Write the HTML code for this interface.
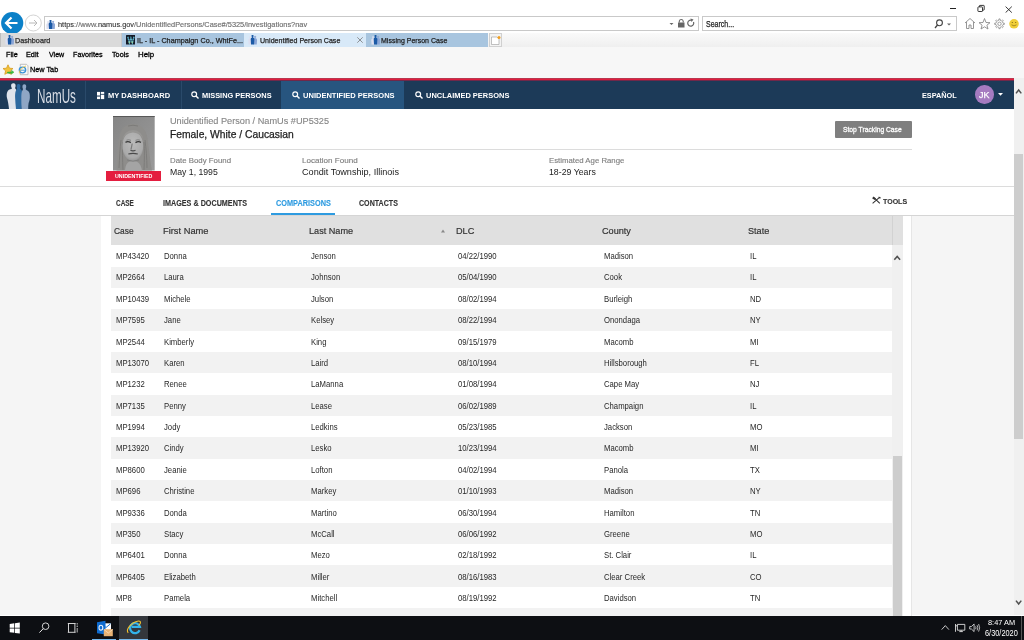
<!DOCTYPE html>
<html><head><meta charset="utf-8">
<style>
*{margin:0;padding:0;box-sizing:border-box}
html,body{width:1024px;height:640px;overflow:hidden;background:#fff;font-family:"Liberation Sans",sans-serif}
div,span,svg{position:absolute}
span{white-space:nowrap;line-height:1}
/* ---------- IE chrome ---------- */
#chrome{left:0;top:0;width:1024px;height:33px;background:#fff}
#tabrow{left:0;top:33px;width:1024px;height:14px;background:linear-gradient(#fafafa,#efefef)}
.tab{top:33px;height:13.5px;font-size:7px;color:#222}
.tab span{top:3.5px}
#menubar{left:0;top:47px;width:1024px;height:31px;background:#f7f7f7}
.menu{top:51px;font-size:7.1px;color:#1e1e1e}
#redline{left:0;top:78px;width:1014px;height:3px;background:linear-gradient(#b9374f 0 1px,#e01d3e 1px 2px,#70284a 2px 3px)}
/* ---------- NamUs nav ---------- */
#nav{left:0;top:81px;width:1014px;height:28px;background:#1c3a58}
.sep{top:80.5px;width:1px;height:28.5px;background:#2a4a6a}
.nav{top:92.3px;font-size:7.45px;font-weight:bold;color:#fff}
/* ---------- page ---------- */
#pagebg{left:0;top:109px;width:1014px;height:506px;background:#f5f5f5}
#hdr{left:0;top:109px;width:1014px;height:107px;background:#fff}
.hl{height:1px;background:#dcdcdc}
.row{left:111px;width:780.5px;height:21.4px;font-size:7.4px;color:#333;background:#fff}
.row.alt{background:#f2f2f2}
.row span{top:8px}
.c1{left:5.2px}.c2{left:54px}.c3{left:200px}.c4{left:347px}.c5{left:493.2px}.c6{left:639.3px}
.th{top:226.3px;font-size:8.9px;color:#333}
/* ---------- scrollbars ---------- */
#pscroll{left:1013.5px;top:78px;width:10.5px;height:537px;background:#f0f0f0}
#taskbar{left:0;top:615.5px;width:1024px;height:24.5px;background:#0d0f13}
</style></head>
<body>
<!-- IE chrome -->
<div id="chrome"></div>
<!-- window controls -->
<div style="left:950.3px;top:8px;width:6px;height:1px;background:#222"></div>
<svg style="left:976px;top:4px" width="10" height="9" viewBox="0 0 10 9"><rect x="1.9" y="2.9" width="4.6" height="4.6" rx="0.6" fill="none" stroke="#222" stroke-width="0.9"/><path d="M3.4 2.9V1.9Q3.4 1.4 3.9 1.4H7.7Q8.2 1.4 8.2 1.9V5.6Q8.2 6.1 7.7 6.1H6.5" fill="none" stroke="#222" stroke-width="0.9"/></svg>
<svg style="left:1005px;top:5.5px" width="8" height="7" viewBox="0 0 8 7"><path d="M0.6 0.6L6.8 6.6M6.8 0.6L0.6 6.6" stroke="#222" stroke-width="0.9"/></svg>
<!-- back / fwd -->
<svg style="left:0;top:11px" width="46" height="24" viewBox="0 0 46 24">
  <circle cx="12.2" cy="12" r="11.1" fill="#0b80c8"/>
  <path d="M6.5 12H17.5M11.5 6.5L6 12L11.5 17.5" fill="none" stroke="#fff" stroke-width="2.2"/>
  <circle cx="33.3" cy="12" r="8" fill="#fff" stroke="#c8c8c8" stroke-width="0.8"/>
  <path d="M29 12H37M34 9L37 12L34 15" fill="none" stroke="#b8b8b8" stroke-width="1"/>
</svg>
<!-- address -->
<div style="left:43.5px;top:16.3px;width:655px;height:14.5px;border:1px solid #c9c9c9;background:#fff"></div>
<svg style="left:46.3px;top:19.5px" width="9.4" height="9.2" viewBox="0 0 8.7 9.6" preserveAspectRatio="none"><path d="M1.40 2.82A0.90 0.90 0 1 1 2.40 2.82L2.35 3.40Q3.60 3.60 3.60 5.10L3.30 9.60L0.50 9.60L0.20 5.10Q0.20 3.60 1.45 3.40Z" fill="#dcdff0"/><path d="M6.08 2.61A0.95 0.95 0 1 1 7.12 2.61L7.07 3.20Q8.40 3.40 8.40 4.90L8.10 9.60L5.10 9.60L4.80 4.90Q4.80 3.40 6.12 3.20Z" fill="#8ba6d6"/><path d="M3.65 1.80A1.00 1.00 0 1 1 4.75 1.80L4.70 2.40Q5.90 2.60 5.90 4.10L5.60 9.60L2.80 9.60L2.50 4.10Q2.50 2.60 3.70 2.40Z" fill="#1b5aa6"/></svg>
<svg style="left:669px;top:18px" width="28" height="11" viewBox="0 0 28 11"><path d="M0.5 5H4.5L2.5 7Z" fill="#666"/><rect x="9" y="4.5" width="6.5" height="5" fill="#666"/><path d="M10.3 4.5V3A2 2 0 0 1 14.2 3V4.5" fill="none" stroke="#666" stroke-width="1.1"/><path d="M24.5 4A3 3 0 1 1 22.2 2.2" fill="none" stroke="#666" stroke-width="1.2"/><path d="M21.5 0.5L24.5 1.5L22.5 4Z" fill="#666"/></svg>
<!-- search -->
<div style="left:702.3px;top:16.3px;width:254.5px;height:14.5px;border:1px solid #c9c9c9;background:#fff"></div>
<svg style="left:934px;top:19px" width="18" height="10" viewBox="0 0 18 10"><circle cx="5.5" cy="3.8" r="2.9" fill="none" stroke="#444" stroke-width="1.1"/><path d="M3.5 6L1 9" stroke="#444" stroke-width="1.3"/><path d="M13 4.5H17L15 6.5Z" fill="#666"/></svg>
<!-- right icons -->
<svg style="left:963px;top:17px" width="58" height="13" viewBox="0 0 58 13">
  <path d="M2 6L7 1.5L12 6M3.5 5V11.5H6V8H8V11.5H10.5V5" fill="none" stroke="#8a8a8a" stroke-width="0.9"/>
  <path d="M21.5 1.5L23 5.5L27 5.7L23.9 8.2L25 12L21.5 9.8L18 12L19.1 8.2L16 5.7L20 5.5Z" fill="none" stroke="#8a8a8a" stroke-width="0.9"/>
  <path d="M40.04 6.17L41.37 6.22L41.37 7.38L40.04 7.43L39.45 8.86L39.45 8.86L40.35 9.83L39.53 10.65L38.56 9.75L37.13 10.34L37.13 10.34L37.08 11.67L35.92 11.67L35.87 10.34L34.44 9.75L34.44 9.75L33.47 10.65L32.65 9.83L33.55 8.86L32.96 7.43L32.96 7.43L31.63 7.38L31.63 6.22L32.96 6.17L33.55 4.74L33.55 4.74L32.65 3.77L33.47 2.95L34.44 3.85L35.87 3.26L35.87 3.26L35.92 1.93L37.08 1.93L37.13 3.26L38.56 3.85L38.56 3.85L39.53 2.95L40.35 3.77L39.45 4.74L40.04 6.17Z" fill="none" stroke="#8a8a8a" stroke-width="0.8" stroke-linejoin="round"/>
  <circle cx="36.5" cy="6.8" r="1.7" fill="none" stroke="#8a8a8a" stroke-width="0.8"/>
  <circle cx="51" cy="6.8" r="4.8" fill="#f0cf3a"/>
  <circle cx="49.3" cy="5.5" r="0.6" fill="#7a6010"/><circle cx="52.7" cy="5.5" r="0.6" fill="#7a6010"/>
  <path d="M48.5 7.8Q51 10 53.5 7.8" fill="none" stroke="#7a6010" stroke-width="0.6"/>
</svg>
<!-- tab row -->
<div id="tabrow"></div>
<div style="left:0;top:46.5px;width:1024px;height:0.5px;background:#d5d5d5"></div>
<div class="tab" style="left:0;width:122.2px;background:#dadada;border-left:1px solid #bdbdbd;border-right:1px solid #c8c8c8"></div>
<div class="tab" style="left:122.2px;width:121.8px;background:#a8c5df"></div>
<div class="tab" style="left:244px;width:122px;background:#d8e9f8"></div>
<div class="tab" style="left:366px;width:121.5px;background:#a8c5df"></div>
<div style="left:488.9px;top:33px;width:12.7px;height:13.5px;background:#f3f3f3;border:1px solid #d0d0d0"></div>
<svg style="left:491px;top:35.5px" width="10" height="9" viewBox="0 0 10 9"><path d="M0.5 1H6L8 3V8.5H0.5Z" fill="#fff" stroke="#999" stroke-width="0.6"/><circle cx="8" cy="1.5" r="1.5" fill="#f2a020"/></svg>
<!-- tab icons -->
<svg style="left:4.5px;top:35.3px" width="9.4" height="9.6" viewBox="0 0 8.7 9.6" preserveAspectRatio="none"><path d="M1.40 2.82A0.90 0.90 0 1 1 2.40 2.82L2.35 3.40Q3.60 3.60 3.60 5.10L3.30 9.60L0.50 9.60L0.20 5.10Q0.20 3.60 1.45 3.40Z" fill="#dcdff0"/><path d="M6.08 2.61A0.95 0.95 0 1 1 7.12 2.61L7.07 3.20Q8.40 3.40 8.40 4.90L8.10 9.60L5.10 9.60L4.80 4.90Q4.80 3.40 6.12 3.20Z" fill="#8ba6d6"/><path d="M3.65 1.80A1.00 1.00 0 1 1 4.75 1.80L4.70 2.40Q5.90 2.60 5.90 4.10L5.60 9.60L2.80 9.60L2.50 4.10Q2.50 2.60 3.70 2.40Z" fill="#1b5aa6"/></svg>
<svg style="left:125.5px;top:35.25px" width="9.75" height="9.5" viewBox="0 0 9.75 9.5"><rect width="9.75" height="9.5" rx="0.5" fill="#141a26"/><path d="M1.8 1.8L3.4 7.8L4.9 3L6.4 7.8L8 1.8" fill="none" stroke="#5ab0c8" stroke-width="1.4"/><path d="M3 6.5L3.6 8M6 6.5L6.4 8" stroke="#9ed49a" stroke-width="1.3"/><rect y="5" width="9.75" height="0.6" fill="#141a26" opacity="0.7"/><rect y="3" width="9.75" height="0.5" fill="#141a26" opacity="0.5"/></svg>
<svg style="left:248.3px;top:35.4px" width="9.4" height="9.6" viewBox="0 0 8.7 9.6" preserveAspectRatio="none"><path d="M1.40 2.82A0.90 0.90 0 1 1 2.40 2.82L2.35 3.40Q3.60 3.60 3.60 5.10L3.30 9.60L0.50 9.60L0.20 5.10Q0.20 3.60 1.45 3.40Z" fill="#dcdff0"/><path d="M6.08 2.61A0.95 0.95 0 1 1 7.12 2.61L7.07 3.20Q8.40 3.40 8.40 4.90L8.10 9.60L5.10 9.60L4.80 4.90Q4.80 3.40 6.12 3.20Z" fill="#8ba6d6"/><path d="M3.65 1.80A1.00 1.00 0 1 1 4.75 1.80L4.70 2.40Q5.90 2.60 5.90 4.10L5.60 9.60L2.80 9.60L2.50 4.10Q2.50 2.60 3.70 2.40Z" fill="#1b5aa6"/></svg>
<svg style="left:370.5px;top:35.4px" width="9.4" height="9.6" viewBox="0 0 8.7 9.6" preserveAspectRatio="none"><path d="M1.40 2.82A0.90 0.90 0 1 1 2.40 2.82L2.35 3.40Q3.60 3.60 3.60 5.10L3.30 9.60L0.50 9.60L0.20 5.10Q0.20 3.60 1.45 3.40Z" fill="#dcdff0"/><path d="M6.08 2.61A0.95 0.95 0 1 1 7.12 2.61L7.07 3.20Q8.40 3.40 8.40 4.90L8.10 9.60L5.10 9.60L4.80 4.90Q4.80 3.40 6.12 3.20Z" fill="#8ba6d6"/><path d="M3.65 1.80A1.00 1.00 0 1 1 4.75 1.80L4.70 2.40Q5.90 2.60 5.90 4.10L5.60 9.60L2.80 9.60L2.50 4.10Q2.50 2.60 3.70 2.40Z" fill="#1b5aa6"/></svg>
<!-- menu bar -->
<div id="menubar"></div>
<svg style="left:0;top:62px" width="30" height="15" viewBox="0 0 30 15">
  <path d="M8 2.8L9.5 6.2L13 6.5L10.4 8.8L11.2 12.3L8 10.5L4.8 12.3L5.6 8.8L3 6.5L6.5 6.2Z" fill="#f3c33a" stroke="#d49a20" stroke-width="0.8" stroke-linejoin="round"/>
  <path d="M7.5 10H11.5V8.3L14 10.2L11.5 12.1V11.2H7.5Z" fill="#3cc040" stroke="#2aa030" stroke-width="0.4"/>
  <path d="M20.3 2.3H26.5L28 3.8V12.7H20.3Z" fill="#fafafa" stroke="#a8a8a8" stroke-width="0.7"/>
  <ellipse cx="22.5" cy="8" rx="3.2" ry="2.8" fill="none" stroke="#3a94d8" stroke-width="1.3"/>
  <path d="M19.5 8.2H25.5" stroke="#3a94d8" stroke-width="0.9"/>
  <path d="M19.8 11.5C18 10 22 5 26 4" fill="none" stroke="#f0c53a" stroke-width="0.9"/>
</svg>
<div id="redline"></div>
<!-- NamUs nav -->
<div id="nav"></div>
<svg style="left:2px;top:81px" width="32" height="28" viewBox="2 81 32 28">
<path d="M9 109C8.6 105 8 101 7 98C6.5 96 6.5 93.5 7.5 91.5C8.2 90 9.5 89.4 11.5 89C12 88.6 11.8 88 11.4 87.2C11 86.2 11 85 11.5 84C12.2 83 14.6 83 15.3 84.2C15.8 85.2 15.7 86.5 15.2 87.4C15 88 15.2 88.6 15.7 89C16.8 90 16.8 93 16.4 96C16.2 100 16.2 104 16.3 109Z" fill="#dfe4ec"/>
<path d="M16 109C15.6 105 15.2 101 15.1 97C15 94 15.4 91 16.6 89.6C17 89 17.2 88.6 16.9 87.8C16.5 86.8 16.6 85.2 17.3 84.5C18 83.9 19.5 84 20.1 84.8C20.6 85.6 20.5 87 20.2 87.8C20 88.5 20.3 89 21 89.5C22.5 90.8 22.8 94 22.6 97C22.4 101 21.9 105 21.7 109Z" fill="#2d69a0"/>
<path d="M21.7 109C21.4 105 21.2 101 21.3 97C21.4 94 21.6 91.5 22.4 90.6C22.9 90 23.2 89.5 22.8 88.6C22.3 87.6 22.3 86 22.8 85C23.4 84 25.3 84 25.9 85C26.4 86 26.3 87.5 25.8 88.6C25.5 89.3 25.9 89.8 26.8 90.2C28.8 91 29.6 92.5 29.8 95C30.1 99 29.4 101 28.6 103C28.2 105 28.2 107 28.2 109Z" fill="#8fa6c5"/>
</svg>
<div class="sep" style="left:85px"></div>
<div class="sep" style="left:180.5px"></div>
<div style="left:281.2px;top:80.5px;width:122.5px;height:28.5px;background:#27557f"></div>
<svg style="left:96px;top:91px" width="10" height="10" viewBox="96 91 10 10"><rect x="97" y="91.9" width="3" height="3.6" fill="#fff"/><rect x="100.8" y="91.9" width="3.4" height="2" fill="#fff"/><rect x="97" y="96.6" width="3" height="2.5" fill="#fff"/><rect x="100.8" y="94.7" width="3.4" height="4.4" fill="#fff"/></svg>
<svg style="left:190.6px;top:91px" width="8" height="8" viewBox="0 0 8 8"><circle cx="3.2" cy="3.2" r="2.4" fill="none" stroke="#fff" stroke-width="1.2"/><path d="M5 5L7.5 7.5" stroke="#fff" stroke-width="1.4"/></svg>
<svg style="left:291.7px;top:91px" width="8" height="8" viewBox="0 0 8 8"><circle cx="3.2" cy="3.2" r="2.4" fill="none" stroke="#fff" stroke-width="1.2"/><path d="M5 5L7.5 7.5" stroke="#fff" stroke-width="1.4"/></svg>
<svg style="left:414.8px;top:91px" width="8" height="8" viewBox="0 0 8 8"><circle cx="3.2" cy="3.2" r="2.4" fill="none" stroke="#fff" stroke-width="1.2"/><path d="M5 5L7.5 7.5" stroke="#fff" stroke-width="1.4"/></svg>
<div style="left:975px;top:85.2px;width:18.5px;height:18.5px;border-radius:50%;background:#a57bc0"></div>
<svg style="left:997.5px;top:93px" width="5" height="3" viewBox="0 0 5 3"><path d="M0 0H5L2.5 2.8Z" fill="#fff"/></svg>
<!-- page -->
<div id="pagebg"></div>
<div id="hdr"></div>
<!-- photo -->
<svg style="left:113px;top:116px" width="41.7" height="54.5" viewBox="113 116 41.7 54.5">
  <defs>
    <linearGradient id="pg" x1="0" y1="0" x2="1" y2="1"><stop offset="0" stop-color="#858585"/><stop offset="1" stop-color="#9a9a9a"/></linearGradient>
    <radialGradient id="fg" cx="0.5" cy="0.4" r="0.65"><stop offset="0" stop-color="#bababa"/><stop offset="0.75" stop-color="#aaaaaa"/><stop offset="1" stop-color="#8e8e8e"/></radialGradient>
    <filter id="bl" x="-20%" y="-20%" width="140%" height="140%"><feGaussianBlur stdDeviation="0.5"/></filter>
  </defs>
  <rect x="113" y="116" width="41.7" height="54.5" fill="url(#pg)"/>
  <rect x="113" y="116" width="41.7" height="1" fill="#585858"/>
  <g filter="url(#bl)">
  <path d="M116.5 170.5C117 160 117.5 148 119 138C120.5 129 125 124 133 124C141 124 146 129 147.5 138C149 148 150 160 152 170.5Z" fill="#8e8d8b"/>
  <path d="M119 168C119.5 158 120 148 121 140M123 170C122.5 160 122.5 150 122.5 142M147 168C147 158 146 148 145 140M144 170C144.5 160 144.5 150 144 142M128 126Q133 124.5 138 126" stroke="#7c7b79" stroke-width="1" fill="none"/>
  <path d="M125 170.5C125.5 165 127 161 133 161C139 161 141 165 142 170.5Z" fill="#a4a4a4"/>
  <ellipse cx="132.8" cy="146" rx="10.4" ry="15" fill="url(#fg)"/>
  <path d="M122.5 140Q124 130.5 133 130Q142 130.5 143.5 140Q141 133 133 132.5Q125 133 122.5 140Z" fill="#979694"/>
  <path d="M125.5 142.3Q128 141 130.8 142.6M135.5 142.6Q138.3 141 141 142.3" stroke="#383838" stroke-width="1.3" fill="none"/>
  <path d="M126.5 140.2Q128.5 139.3 131 140.3M135.5 140.3Q138 139.3 140 140.2" stroke="#6a6a6a" stroke-width="0.7" fill="none"/>
  <path d="M132.2 143.5Q131.6 147 131 149.5" stroke="#7a7a7a" stroke-width="1.2" fill="none"/>
  <path d="M130.5 150.3Q133 151.5 135.5 150.3" stroke="#474747" stroke-width="1.1" fill="none"/>
  <path d="M128.3 154Q133 152.8 137.8 154" stroke="#4a4a4a" stroke-width="1.2" fill="none"/>
  <path d="M127 160Q133 162.5 139 160" stroke="#7e7e7e" stroke-width="1" fill="none"/>
  </g>
</svg>
<div style="left:105.9px;top:170.5px;width:55.1px;height:10.3px;background:#e41e3f"></div>
<div class="hl" style="left:170px;top:149.3px;width:742px"></div>
<div style="left:834.5px;top:121px;width:77.5px;height:17px;background:#7f7f7f;border-radius:1px"></div>
<div class="hl" style="left:0;top:186px;width:1014px"></div>
<!-- case tabs -->
<div style="left:271px;top:213px;width:64px;height:2px;background:#2e9be0"></div>
<svg style="left:870px;top:195px" width="12" height="11" viewBox="870 195 12 11"><path d="M872.6 203.3L879.2 197.6M874.2 197.8L879.8 203.4" stroke="#333" stroke-width="1.1" fill="none"/><path d="M872.1 198.3L873.5 196.6L876 198.4L874.7 199.9Z" fill="#333"/><path d="M878.3 196.8L880.6 196.9L880.2 199L879.1 198Z" fill="#333"/></svg>
<div class="hl" style="left:0;top:215.3px;width:1014px;background:#d5d5d5"></div>
<!-- table panel -->
<div style="left:101px;top:216px;width:811px;height:399.5px;background:#fff;border-right:1px solid #e6e6e6"></div>
<div style="left:111px;top:216px;width:792px;height:29.3px;background:#e0e0e0"></div>
<div style="left:891.5px;top:216px;width:0.7px;height:29.3px;background:#d2d2d2"></div>
<svg style="left:441px;top:228.5px" width="4" height="4" viewBox="0 0 4 4"><path d="M0 3.5H4L2 0.5Z" fill="#888"/></svg>
<!-- table scrollbar -->
<div style="left:892.3px;top:245px;width:10.5px;height:370.5px;background:#f0f0f0"></div>
<div style="left:893px;top:455.5px;width:9.2px;height:160px;background:#cdcdcd"></div>
<svg style="left:890px;top:250px" width="14" height="14" viewBox="890 250 14 14"><path d="M894.3 259.8L897.2 256.4L900.1 259.8" fill="none" stroke="#505050" stroke-width="1.5"/></svg>
<style>.rt{font-size:8.70px;color:#282828;transform:scaleX(0.888);transform-origin:0 0}</style>
<div style="left:111px;top:245.24px;width:780.5px;height:21.38px;background:#fff"></div>
<div style="left:111px;top:266.57px;width:780.5px;height:21.38px;background:#f2f2f2"></div>
<div style="left:111px;top:287.90px;width:780.5px;height:21.38px;background:#fff"></div>
<div style="left:111px;top:309.23px;width:780.5px;height:21.38px;background:#f2f2f2"></div>
<div style="left:111px;top:330.56px;width:780.5px;height:21.38px;background:#fff"></div>
<div style="left:111px;top:351.89px;width:780.5px;height:21.38px;background:#f2f2f2"></div>
<div style="left:111px;top:373.22px;width:780.5px;height:21.38px;background:#fff"></div>
<div style="left:111px;top:394.55px;width:780.5px;height:21.38px;background:#f2f2f2"></div>
<div style="left:111px;top:415.88px;width:780.5px;height:21.38px;background:#fff"></div>
<div style="left:111px;top:437.21px;width:780.5px;height:21.38px;background:#f2f2f2"></div>
<div style="left:111px;top:458.54px;width:780.5px;height:21.38px;background:#fff"></div>
<div style="left:111px;top:479.87px;width:780.5px;height:21.38px;background:#f2f2f2"></div>
<div style="left:111px;top:501.20px;width:780.5px;height:21.38px;background:#fff"></div>
<div style="left:111px;top:522.53px;width:780.5px;height:21.38px;background:#f2f2f2"></div>
<div style="left:111px;top:543.86px;width:780.5px;height:21.38px;background:#fff"></div>
<div style="left:111px;top:565.19px;width:780.5px;height:21.38px;background:#f2f2f2"></div>
<div style="left:111px;top:586.52px;width:780.5px;height:21.38px;background:#fff"></div>
<div style="left:111px;top:607.85px;width:780.5px;height:21.38px;background:#f2f2f2"></div>
<span class="rt" style="left:115.53px;top:252.10px">MP43420</span>
<span class="rt" style="left:164.43px;top:252.10px">Donna</span>
<span class="rt" style="left:310.53px;top:252.10px">Jenson</span>
<span class="rt" style="left:458.23px;top:252.10px">04/22/1990</span>
<span class="rt" style="left:603.73px;top:252.10px">Madison</span>
<span class="rt" style="left:749.83px;top:252.10px">IL</span>
<span class="rt" style="left:115.53px;top:273.47px">MP2664</span>
<span class="rt" style="left:164.43px;top:273.47px">Laura</span>
<span class="rt" style="left:310.53px;top:273.47px">Johnson</span>
<span class="rt" style="left:458.23px;top:273.47px">05/04/1990</span>
<span class="rt" style="left:603.73px;top:273.47px">Cook</span>
<span class="rt" style="left:749.83px;top:273.47px">IL</span>
<span class="rt" style="left:115.53px;top:294.84px">MP10439</span>
<span class="rt" style="left:164.43px;top:294.84px">Michele</span>
<span class="rt" style="left:310.53px;top:294.84px">Julson</span>
<span class="rt" style="left:458.23px;top:294.84px">08/02/1994</span>
<span class="rt" style="left:603.73px;top:294.84px">Burleigh</span>
<span class="rt" style="left:749.83px;top:294.84px">ND</span>
<span class="rt" style="left:115.53px;top:316.21px">MP7595</span>
<span class="rt" style="left:164.43px;top:316.21px">Jane</span>
<span class="rt" style="left:310.53px;top:316.21px">Kelsey</span>
<span class="rt" style="left:458.23px;top:316.21px">08/22/1994</span>
<span class="rt" style="left:603.73px;top:316.21px">Onondaga</span>
<span class="rt" style="left:749.83px;top:316.21px">NY</span>
<span class="rt" style="left:115.53px;top:337.58px">MP2544</span>
<span class="rt" style="left:164.43px;top:337.58px">Kimberly</span>
<span class="rt" style="left:310.53px;top:337.58px">King</span>
<span class="rt" style="left:458.23px;top:337.58px">09/15/1979</span>
<span class="rt" style="left:603.73px;top:337.58px">Macomb</span>
<span class="rt" style="left:749.83px;top:337.58px">MI</span>
<span class="rt" style="left:115.53px;top:358.95px">MP13070</span>
<span class="rt" style="left:164.43px;top:358.95px">Karen</span>
<span class="rt" style="left:310.53px;top:358.95px">Laird</span>
<span class="rt" style="left:458.23px;top:358.95px">08/10/1994</span>
<span class="rt" style="left:603.73px;top:358.95px">Hillsborough</span>
<span class="rt" style="left:749.83px;top:358.95px">FL</span>
<span class="rt" style="left:115.53px;top:380.32px">MP1232</span>
<span class="rt" style="left:164.43px;top:380.32px">Renee</span>
<span class="rt" style="left:310.53px;top:380.32px">LaManna</span>
<span class="rt" style="left:458.23px;top:380.32px">01/08/1994</span>
<span class="rt" style="left:603.73px;top:380.32px">Cape May</span>
<span class="rt" style="left:749.83px;top:380.32px">NJ</span>
<span class="rt" style="left:115.53px;top:401.69px">MP7135</span>
<span class="rt" style="left:164.43px;top:401.69px">Penny</span>
<span class="rt" style="left:310.53px;top:401.69px">Lease</span>
<span class="rt" style="left:458.23px;top:401.69px">06/02/1989</span>
<span class="rt" style="left:603.73px;top:401.69px">Champaign</span>
<span class="rt" style="left:749.83px;top:401.69px">IL</span>
<span class="rt" style="left:115.53px;top:423.06px">MP1994</span>
<span class="rt" style="left:164.43px;top:423.06px">Jody</span>
<span class="rt" style="left:310.53px;top:423.06px">Ledkins</span>
<span class="rt" style="left:458.23px;top:423.06px">05/23/1985</span>
<span class="rt" style="left:603.73px;top:423.06px">Jackson</span>
<span class="rt" style="left:749.83px;top:423.06px">MO</span>
<span class="rt" style="left:115.53px;top:444.43px">MP13920</span>
<span class="rt" style="left:164.43px;top:444.43px">Cindy</span>
<span class="rt" style="left:310.53px;top:444.43px">Lesko</span>
<span class="rt" style="left:458.23px;top:444.43px">10/23/1994</span>
<span class="rt" style="left:603.73px;top:444.43px">Macomb</span>
<span class="rt" style="left:749.83px;top:444.43px">MI</span>
<span class="rt" style="left:115.53px;top:465.80px">MP8600</span>
<span class="rt" style="left:164.43px;top:465.80px">Jeanie</span>
<span class="rt" style="left:310.53px;top:465.80px">Lofton</span>
<span class="rt" style="left:458.23px;top:465.80px">04/02/1994</span>
<span class="rt" style="left:603.73px;top:465.80px">Panola</span>
<span class="rt" style="left:749.83px;top:465.80px">TX</span>
<span class="rt" style="left:115.53px;top:487.17px">MP696</span>
<span class="rt" style="left:164.43px;top:487.17px">Christine</span>
<span class="rt" style="left:310.53px;top:487.17px">Markey</span>
<span class="rt" style="left:458.23px;top:487.17px">01/10/1993</span>
<span class="rt" style="left:603.73px;top:487.17px">Madison</span>
<span class="rt" style="left:749.83px;top:487.17px">NY</span>
<span class="rt" style="left:115.53px;top:508.54px">MP9336</span>
<span class="rt" style="left:164.43px;top:508.54px">Donda</span>
<span class="rt" style="left:310.53px;top:508.54px">Martino</span>
<span class="rt" style="left:458.23px;top:508.54px">06/30/1994</span>
<span class="rt" style="left:603.73px;top:508.54px">Hamilton</span>
<span class="rt" style="left:749.83px;top:508.54px">TN</span>
<span class="rt" style="left:115.53px;top:529.91px">MP350</span>
<span class="rt" style="left:164.43px;top:529.91px">Stacy</span>
<span class="rt" style="left:310.53px;top:529.91px">McCall</span>
<span class="rt" style="left:458.23px;top:529.91px">06/06/1992</span>
<span class="rt" style="left:603.73px;top:529.91px">Greene</span>
<span class="rt" style="left:749.83px;top:529.91px">MO</span>
<span class="rt" style="left:115.53px;top:551.28px">MP6401</span>
<span class="rt" style="left:164.43px;top:551.28px">Donna</span>
<span class="rt" style="left:310.53px;top:551.28px">Mezo</span>
<span class="rt" style="left:458.23px;top:551.28px">02/18/1992</span>
<span class="rt" style="left:603.73px;top:551.28px">St. Clair</span>
<span class="rt" style="left:749.83px;top:551.28px">IL</span>
<span class="rt" style="left:115.53px;top:572.65px">MP6405</span>
<span class="rt" style="left:164.43px;top:572.65px">Elizabeth</span>
<span class="rt" style="left:310.53px;top:572.65px">Miller</span>
<span class="rt" style="left:458.23px;top:572.65px">08/16/1983</span>
<span class="rt" style="left:603.73px;top:572.65px">Clear Creek</span>
<span class="rt" style="left:749.83px;top:572.65px">CO</span>
<span class="rt" style="left:115.53px;top:594.02px">MP8</span>
<span class="rt" style="left:164.43px;top:594.02px">Pamela</span>
<span class="rt" style="left:310.53px;top:594.02px">Mitchell</span>
<span class="rt" style="left:458.23px;top:594.02px">08/19/1992</span>
<span class="rt" style="left:603.73px;top:594.02px">Davidson</span>
<span class="rt" style="left:749.83px;top:594.02px">TN</span>
<!-- page scrollbar -->
<div id="pscroll"></div>
<div style="left:1014.2px;top:153.7px;width:8.6px;height:285.5px;background:#cdcdcd"></div>
<svg style="left:1013px;top:84px" width="11" height="14" viewBox="1013 84 11 14"><path d="M1016 93.4L1018.65 90L1021.3 93.4" fill="none" stroke="#505050" stroke-width="1.5"/></svg>
<svg style="left:1013px;top:595px" width="11" height="14" viewBox="1013 595 11 14"><path d="M1016 600.6L1018.65 604L1021.3 600.6" fill="none" stroke="#505050" stroke-width="1.5"/></svg>
<!-- taskbar -->
<div id="taskbar"></div>
<svg style="left:0;top:616px" width="90" height="24" viewBox="0 616 90 24">
<path d="M9.7 623.9L14.3 623.3V627.7H9.7ZM15 623.2L19.8 622.6V627.7H15ZM9.7 628.4H14.3V632.8L9.7 632.2ZM15 628.4H19.8V633.4L15 632.9Z" fill="#fff"/>
<circle cx="45.6" cy="626.2" r="3.3" fill="none" stroke="#e6e6e6" stroke-width="0.9"/>
<path d="M43.3 628.6L39.4 632.6" stroke="#e6e6e6" stroke-width="1"/>
<path d="M67.8 623.5H75.6M67.8 632.3H75.6M68.5 623.5V632.3M74.9 623.5V632.3" fill="none" stroke="#e6e6e6" stroke-width="0.9"/>
<path d="M77.2 628V632.5" stroke="#c8c8c8" stroke-width="0.9"/><circle cx="77.2" cy="626.2" r="0.6" fill="#fff"/><path d="M77.2 623V624.6" stroke="#c8c8c8" stroke-width="0.9"/>
</svg>
<svg style="left:96px;top:620px" width="18" height="17" viewBox="96 620 18 17"><rect x="101" y="623.3" width="10" height="7" fill="#fff"/><path d="M101.5 623.8L106 627.5L110.5 623.8" fill="none" stroke="#1a73d0" stroke-width="1"/><path d="M97 622.3L105.5 620.8V634.6L97 633.2Z" fill="#0d6bd0"/><ellipse cx="100.9" cy="627.7" rx="1.9" ry="2.4" fill="none" stroke="#e8f0fa" stroke-width="1.1"/><rect x="103.8" y="629.2" width="9" height="7" fill="#e8b274"/><path d="M103.8 629.4L108.3 633L112.8 629.4" fill="none" stroke="#f8e0c0" stroke-width="0.8"/></svg>
<div style="left:92.2px;top:638.6px;width:24.2px;height:1.4px;background:#76b9ed"></div>
<div style="left:119.3px;top:615.5px;width:28.5px;height:24.5px;background:#34373c"></div>
<div style="left:119.3px;top:638.6px;width:28.5px;height:1.4px;background:#76b9ed"></div>
<svg style="left:119px;top:616px" width="30" height="24" viewBox="119 616 30 24">
  <path d="M139.6 630.2A5 5 0 1 1 139.9 626.9H131.8" fill="none" stroke="#33b4ec" stroke-width="2.3"/>
  <path d="M128.2 632.8C125.5 630 131 622.5 137.5 621.2C141.5 620.4 141 623.5 138.8 625.2" fill="none" stroke="#f2c12e" stroke-width="1.1"/>
</svg>
<!-- tray -->
<svg style="left:936px;top:616px" width="50" height="24" viewBox="936 616 50 24">
<path d="M941.7 629.6L945.3 625.6L948.9 629.6" fill="none" stroke="#e8e8e8" stroke-width="0.85"/>
<path d="M957.4 624.4H964.8V630.2H957.4ZM959.3 631.6H962.9M961.1 630.2V631.6M955.5 624V631.8M955.5 625.8H957.4" fill="none" stroke="#e8e8e8" stroke-width="0.85"/>
<path d="M969.7 626.6H971.4L974.1 624V631.6L971.4 629H969.7Z" fill="none" stroke="#e8e8e8" stroke-width="0.8"/>
<path d="M975.6 626.4Q976.4 627.8 975.6 629.2M977.1 625.2Q978.6 627.8 977.1 630.4M978.6 624Q980.7 627.8 978.6 631.6" fill="none" stroke="#e8e8e8" stroke-width="0.75"/>
</svg>
<div style="left:1021px;top:615.5px;width:1px;height:24.5px;background:#555"></div>
<span style="left:37.2px;top:87.2px;font-size:19.8px;color:#d9dee6;transform:scaleX(0.59);transform-origin:0 0">NamUs</span>
<svg style="left:356.8px;top:37.3px" width="6" height="6" viewBox="0 0 6 6"><path d="M0.3 0.3L5.7 5.7M5.7 0.3L0.3 5.7" stroke="#7a7a7a" stroke-width="0.8"/></svg>
<span class="tx" style="left:58.12px;top:21.01px;font-size:7.70px;font-weight:400;color:#6e6e6e;transform:scaleX(0.962);transform-origin:0 0;-webkit-text-stroke:0.15px #6e6e6e"><b style='font-weight:normal;color:#1a1a1a'>https</b>://www.<b style='font-weight:normal;color:#1a1a1a'>namus.gov</b>/UnidentifiedPersons/Case#/5325/investigations?nav</span>
<span class="tx" style="left:706.49px;top:20.01px;font-size:8.55px;font-weight:400;color:#1e1e1e;transform:scaleX(0.821);transform-origin:0 0;-webkit-text-stroke:0.25px #1e1e1e">Search...</span>
<span class="tx" style="left:15.22px;top:37.00px;font-size:7.97px;font-weight:400;color:#2a2a2a;transform:scaleX(0.906);transform-origin:0 0;-webkit-text-stroke:0.25px #2a2a2a">Dashboard</span>
<span class="tx" style="left:137.12px;top:37.00px;font-size:7.97px;font-weight:400;color:#1e1e1e;transform:scaleX(0.908);transform-origin:0 0;-webkit-text-stroke:0.25px #1e1e1e">IL - IL - Champaign Co., WhtFe...</span>
<span class="tx" style="left:259.56px;top:37.00px;font-size:7.97px;font-weight:400;color:#1e1e1e;transform:scaleX(0.889);transform-origin:0 0;-webkit-text-stroke:0.25px #1e1e1e">Unidentified Person Case</span>
<span class="tx" style="left:380.94px;top:37.00px;font-size:7.97px;font-weight:400;color:#1e1e1e;transform:scaleX(0.881);transform-origin:0 0;-webkit-text-stroke:0.25px #1e1e1e">Missing Person Case</span>
<span class="tx" style="left:5.54px;top:51.01px;font-size:7.68px;font-weight:400;color:#000000;transform:scaleX(0.947);transform-origin:0 0;-webkit-text-stroke:0.3px #000000">File</span>
<span class="tx" style="left:26.19px;top:51.01px;font-size:7.68px;font-weight:400;color:#000000;transform:scaleX(0.948);transform-origin:0 0;-webkit-text-stroke:0.3px #000000">Edit</span>
<span class="tx" style="left:48.75px;top:51.01px;font-size:7.68px;font-weight:400;color:#000000;transform:scaleX(0.924);transform-origin:0 0;-webkit-text-stroke:0.3px #000000">View</span>
<span class="tx" style="left:73.05px;top:51.01px;font-size:7.68px;font-weight:400;color:#000000;transform:scaleX(0.936);transform-origin:0 0;-webkit-text-stroke:0.3px #000000">Favorites</span>
<span class="tx" style="left:112.26px;top:51.01px;font-size:7.68px;font-weight:400;color:#000000;transform:scaleX(0.943);transform-origin:0 0;-webkit-text-stroke:0.3px #000000">Tools</span>
<span class="tx" style="left:137.98px;top:51.01px;font-size:7.68px;font-weight:400;color:#000000;transform:scaleX(1.027);transform-origin:0 0;-webkit-text-stroke:0.3px #000000">Help</span>
<span class="tx" style="left:30.21px;top:66.01px;font-size:7.97px;font-weight:400;color:#000000;transform:scaleX(0.914);transform-origin:0 0;-webkit-text-stroke:0.3px #000000">New Tab</span>
<span class="tx" style="left:107.63px;top:92.01px;font-size:7.97px;font-weight:700;color:#ffffff;transform:scaleX(0.943);transform-origin:0 0">MY DASHBOARD</span>
<span class="tx" style="left:201.94px;top:92.01px;font-size:7.97px;font-weight:700;color:#ffffff;transform:scaleX(0.930);transform-origin:0 0">MISSING PERSONS</span>
<span class="tx" style="left:302.93px;top:92.01px;font-size:7.97px;font-weight:700;color:#ffffff;transform:scaleX(0.945);transform-origin:0 0">UNIDENTIFIED PERSONS</span>
<span class="tx" style="left:426.03px;top:92.01px;font-size:7.97px;font-weight:700;color:#ffffff;transform:scaleX(0.937);transform-origin:0 0">UNCLAIMED PERSONS</span>
<span class="tx" style="left:922.34px;top:92.00px;font-size:7.97px;font-weight:700;color:#ffffff;transform:scaleX(0.915);transform-origin:0 0">ESPAÑOL</span>
<span class="tx" style="left:979.24px;top:91.00px;font-size:8.70px;font-weight:400;color:#ffffff;transform:scaleX(1.026);transform-origin:0 0;-webkit-text-stroke:0.25px #ffffff">JK</span>
<span class="tx" style="left:169.75px;top:117.00px;font-size:9.13px;font-weight:400;color:#858585;transform:scaleX(1.005);transform-origin:0 0;-webkit-text-stroke:0.12px #858585">Unidentified Person / NamUs #UP5325</span>
<span class="tx" style="left:170.14px;top:130.00px;font-size:10.14px;font-weight:400;color:#1e1e1e;transform:scaleX(1.018);transform-origin:0 0;-webkit-text-stroke:0.25px #1e1e1e">Female, White / Caucasian</span>
<span class="tx" style="left:170.08px;top:157.01px;font-size:7.54px;font-weight:400;color:#7d7d7d;transform:scaleX(1.042);transform-origin:0 0;-webkit-text-stroke:0.12px #7d7d7d">Date Body Found</span>
<span class="tx" style="left:169.90px;top:168.01px;font-size:9.28px;font-weight:400;color:#222222;transform:scaleX(0.937);transform-origin:0 0">May 1, 1995</span>
<span class="tx" style="left:302.26px;top:157.01px;font-size:7.54px;font-weight:400;color:#7d7d7d;transform:scaleX(1.072);transform-origin:0 0;-webkit-text-stroke:0.12px #7d7d7d">Location Found</span>
<span class="tx" style="left:302.31px;top:168.01px;font-size:9.28px;font-weight:400;color:#222222;transform:scaleX(0.982);transform-origin:0 0">Condit Township, Illinois</span>
<span class="tx" style="left:549.38px;top:157.01px;font-size:7.54px;font-weight:400;color:#7d7d7d;transform:scaleX(1.034);transform-origin:0 0;-webkit-text-stroke:0.12px #7d7d7d">Estimated Age Range</span>
<span class="tx" style="left:549.19px;top:168.01px;font-size:9.28px;font-weight:400;color:#222222;transform:scaleX(0.946);transform-origin:0 0">18-29 Years</span>
<span class="tx" style="left:843.44px;top:126.00px;font-size:7.39px;font-weight:400;color:#ffffff;transform:scaleX(0.912);transform-origin:0 0;-webkit-text-stroke:0.28px #ffffff">Stop Tracking Case</span>
<span class="tx" style="left:114.97px;top:174.00px;font-size:5.80px;font-weight:700;color:#ffffff;transform:scaleX(0.920);transform-origin:0 0">UNIDENTIFIED</span>
<span class="tx" style="left:116.06px;top:199.00px;font-size:8.55px;font-weight:700;color:#333333;transform:scaleX(0.753);transform-origin:0 0;-webkit-text-stroke:0.12px #333333">CASE</span>
<span class="tx" style="left:162.98px;top:199.00px;font-size:8.55px;font-weight:700;color:#333333;transform:scaleX(0.843);transform-origin:0 0;-webkit-text-stroke:0.12px #333333">IMAGES &amp; DOCUMENTS</span>
<span class="tx" style="left:275.69px;top:199.00px;font-size:8.55px;font-weight:700;color:#2e9be0;transform:scaleX(0.857);transform-origin:0 0;-webkit-text-stroke:0.12px #2e9be0">COMPARISONS</span>
<span class="tx" style="left:359.19px;top:199.00px;font-size:8.55px;font-weight:700;color:#333333;transform:scaleX(0.830);transform-origin:0 0;-webkit-text-stroke:0.12px #333333">CONTACTS</span>
<span class="tx" style="left:883.30px;top:198.01px;font-size:7.83px;font-weight:700;color:#333333;transform:scaleX(0.898);transform-origin:0 0;-webkit-text-stroke:0.12px #333333">TOOLS</span>
<span class="tx" style="left:113.98px;top:226.00px;font-size:9.86px;font-weight:400;color:#333333;transform:scaleX(0.850);transform-origin:0 0;-webkit-text-stroke:0.2px #333333">Case</span>
<span class="tx" style="left:162.69px;top:226.00px;font-size:9.86px;font-weight:400;color:#333333;transform:scaleX(0.945);transform-origin:0 0;-webkit-text-stroke:0.2px #333333">First Name</span>
<span class="tx" style="left:308.70px;top:226.00px;font-size:9.86px;font-weight:400;color:#333333;transform:scaleX(0.927);transform-origin:0 0;-webkit-text-stroke:0.2px #333333">Last Name</span>
<span class="tx" style="left:455.90px;top:226.00px;font-size:9.86px;font-weight:400;color:#333333;transform:scaleX(0.927);transform-origin:0 0;-webkit-text-stroke:0.2px #333333">DLC</span>
<span class="tx" style="left:602.24px;top:226.00px;font-size:9.86px;font-weight:400;color:#333333;transform:scaleX(0.927);transform-origin:0 0;-webkit-text-stroke:0.2px #333333">County</span>
<span class="tx" style="left:748.29px;top:226.00px;font-size:9.86px;font-weight:400;color:#333333;transform:scaleX(0.927);transform-origin:0 0;-webkit-text-stroke:0.2px #333333">State</span>
<span class="tx" style="left:987.56px;top:619.00px;font-size:7.54px;font-weight:400;color:#ffffff;transform:scaleX(0.979);transform-origin:0 0">8:47 AM</span>
<span class="tx" style="left:984.98px;top:629.01px;font-size:8.70px;font-weight:400;color:#ffffff;transform:scaleX(0.848);transform-origin:0 0">6/30/2020</span>
</body></html>
